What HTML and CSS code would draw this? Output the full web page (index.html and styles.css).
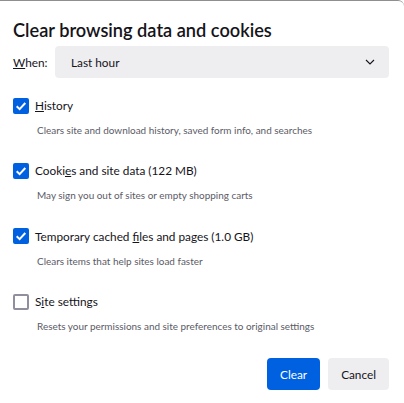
FILE: index.html
```html
<!DOCTYPE html>
<html>
<head>
<meta charset="utf-8">
<link rel="stylesheet" href="styles.css">
</head>
<body>
<div class="dialog">
  <h1 class="title">Clear browsing data and cookies</h1>
  <div class="when-row">
    <span class="when-label"><u>W</u>hen:</span>
    <div class="select">
      <span>Last hour</span>
      <svg class="chevron" width="12" height="12" viewBox="0 0 12 12"><path d="M2 4 L6 8 L10 4" fill="none" stroke="#15141a" stroke-width="1.1"/></svg>
    </div>
  </div>
  <div class="options">
    <div class="option">
      <div class="option-row">
        <span class="checkbox checked"><svg width="16" height="16" viewBox="0 0 16 16"><path d="M3.7 8.3 L6.6 11.1 L12.3 5" fill="none" stroke="#fff" stroke-width="2"/></svg></span>
        <span class="label"><u>H</u>istory</span>
      </div>
      <div class="desc">Clears site and download history, saved form info, and searches</div>
    </div>
    <div class="option">
      <div class="option-row">
        <span class="checkbox checked"><svg width="16" height="16" viewBox="0 0 16 16"><path d="M3.7 8.3 L6.6 11.1 L12.3 5" fill="none" stroke="#fff" stroke-width="2"/></svg></span>
        <span class="label">Cooki<u>e</u>s and site data (122 MB)</span>
      </div>
      <div class="desc">May sign you out of sites or empty shopping carts</div>
    </div>
    <div class="option">
      <div class="option-row">
        <span class="checkbox checked"><svg width="16" height="16" viewBox="0 0 16 16"><path d="M3.7 8.3 L6.6 11.1 L12.3 5" fill="none" stroke="#fff" stroke-width="2"/></svg></span>
        <span class="label">Temporary cached <u>f</u>iles and pages (1.0 GB)</span>
      </div>
      <div class="desc">Clears items that help sites load faster</div>
    </div>
    <div class="option">
      <div class="option-row">
        <span class="checkbox"></span>
        <span class="label">S<u>i</u>te settings</span>
      </div>
      <div class="desc">Resets your permissions and site preferences to original settings</div>
    </div>
  </div>
  <div class="buttons">
    <button class="btn primary">Clear</button>
    <button class="btn">Cancel</button>
  </div>
</div>
</body>
</html>
```
FILE: styles.css
```css
html, body {
  margin: 0;
  padding: 0;
  background: #ffffff;
}
body {
  font-family: "Lato", "Open Sans", sans-serif;
  color: #15141a;
  width: 404px;
  height: 403px;
  overflow: hidden;
}
.dialog {
  box-sizing: border-box;
  width: 404px;
  height: 403px;
  border-top: 1px solid #8f8f93;
  border-top-right-radius: 6px;
  padding: 0 15px 0 13px;
}
.title {
  margin: 17px 0 0 0;
  font-size: 18.2px;
  font-weight: 600;
  line-height: 24px;
}
.when-row {
  display: flex;
  align-items: center;
  margin-top: 4px;
}
.when-label {
  font-size: 11.8px;
  width: 42px;
}
.select {
  flex: 1;
  height: 32px;
  border-radius: 4px;
  background: #eeeef1;
  display: flex;
  align-items: center;
  justify-content: space-between;
  padding: 0 13px 0 16px;
  font-size: 11.8px;
}
.chevron {
  display: block;
}
.options {
  display: flex;
  flex-direction: column;
  gap: 21.8px;
  margin-top: 16.7px;
}
.option-row {
  display: flex;
  align-items: center;
  height: 22px;
  gap: 6px;
}
.checkbox {
  box-sizing: border-box;
  width: 16px;
  height: 16px;
  border-radius: 2px;
  border: 2px solid #8f8f9d;
  display: flex;
  align-items: center;
  justify-content: center;
}
.checkbox.checked {
  background: #0061e0;
  border: none;
}
.checkbox svg {
  display: block;
}
.label {
  font-size: 11.8px;
}
.desc {
  margin-top: 5.5px;
  margin-left: 24px;
  font-size: 9.95px;
  line-height: 16px;
  color: #5b5b66;
}
.buttons {
  display: flex;
  justify-content: flex-end;
  gap: 8px;
  margin-top: 24.2px;
}
.btn {
  height: 32px;
  border: none;
  border-radius: 4px;
  background: #eeeef1;
  color: #15141a;
  font-family: inherit;
  font-size: 11.8px;
  padding: 0 13px;
}
.btn.primary {
  background: #0061e0;
  color: #fff;
}
```
